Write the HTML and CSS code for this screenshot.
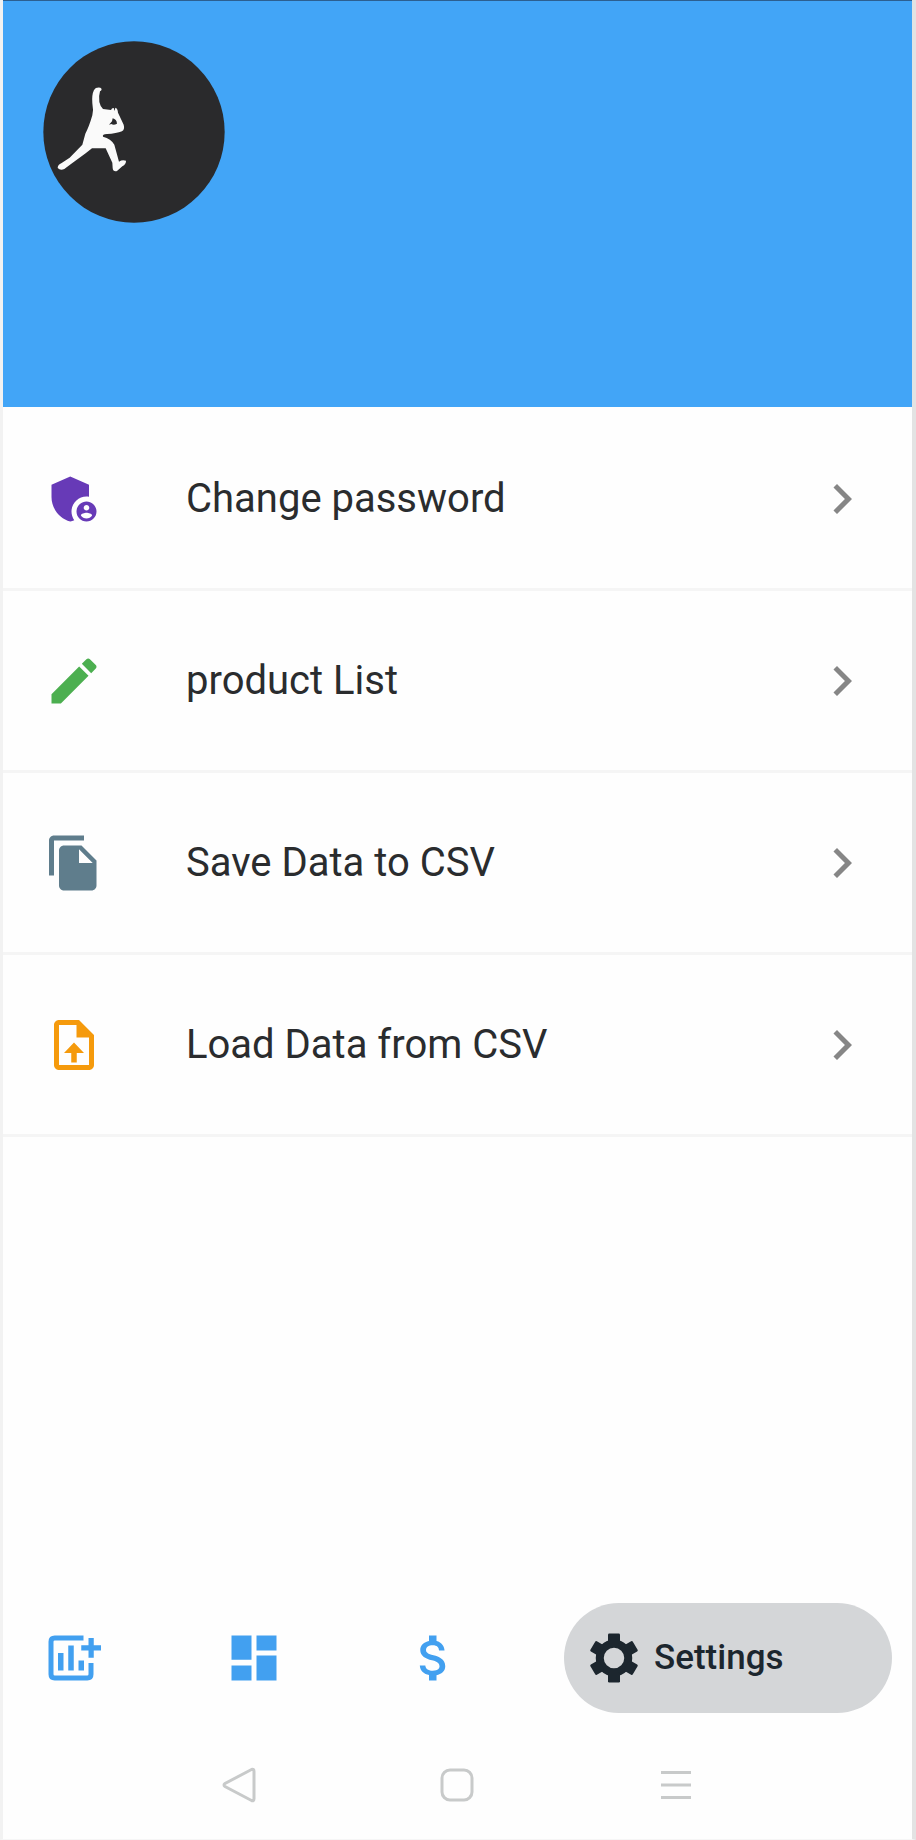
FILE: index.html
```html
<!DOCTYPE html>
<html lang="en">
<head>
<meta charset="utf-8">
<meta name="viewport" content="width=device-width, initial-scale=1">
<title>Settings</title>
<link rel="stylesheet" href="styles.css">
</head>
<body>
<div class="screen">
  <header class="profile">
    <svg class="avatar" viewBox="0 0 546 546" role="img" aria-label="Profile picture">
      <circle cx="273" cy="273" r="272" fill="#2a2a2c"/>
      <g transform="translate(20 103)">
        <path fill="#fafafa" d="M133 44Q138 35 152 37Q160 42 151 48Q147 60 149 80Q152 94 160 101L184 104Q187 97 192 98L195 107L197 97Q204 98 205 112L222 148Q226 162 217 168Q200 175 172 176Q157 177 160 184Q184 190 194 208L208 259Q218 252 229 256Q230 266 218 273L202 287Q190 290 189 278L188 262L168 219H127L108 234L64 266L44 281Q32 287 24 278Q24 268 36 263L60 247L98 208L107 175Q118 155 128 120Q132 104 128 84Q126 58 133 44Z"/>
        <path fill="#2a2a2c" d="M189 129Q201 132 202 145Q192 151 185 146L178 148L187 138Z"/>
      </g>
    </svg>
  </header>

  <main class="content">
    <ul class="menu">
      <li><button class="row" type="button">
        <svg class="icon violet" viewBox="0 0 24 24" aria-hidden="true"><path d="M17 11c.34 0 .67.04 1 .09V6.27L10.5 3 3 6.27v4.91c0 4.54 3.2 8.79 7.5 9.82.55-.13 1.08-.32 1.6-.55-.69-.98-1.1-2.17-1.1-3.45 0-3.31 2.69-6 6-6z"/><path d="M17 13c-2.21 0-4 1.79-4 4s1.79 4 4 4 4-1.79 4-4-1.79-4-4-4zm0 1.38c.62 0 1.12.51 1.12 1.12s-.51 1.12-1.12 1.12-1.12-.51-1.12-1.12.5-1.12 1.12-1.12zm0 5.37c-.93 0-1.74-.46-2.24-1.17.05-.72 1.51-1.08 2.24-1.08s2.19.36 2.24 1.08c-.5.71-1.31 1.17-2.24 1.17z"/></svg>
        <span class="label">Change password</span>
        <svg class="icon chevron" viewBox="0 0 24 24" aria-hidden="true"><path d="M10 6 8.590 7.410 13.170 12l-4.580 4.590L10 18l6-6z"/></svg>
      </button></li>
      <li><button class="row" type="button">
        <svg class="icon green" viewBox="0 0 24 24" aria-hidden="true"><path d="M3 17.250V21h3.750L17.810 9.940l-3.750-3.750L3 17.250zM20.710 7.040c.39-.39.39-1.020 0-1.410l-2.340-2.340c-.39-.39-1.020-.39-1.410 0l-1.830 1.830 3.750 3.750 1.830-1.830z"/></svg>
        <span class="label">product List</span>
        <svg class="icon chevron" viewBox="0 0 24 24" aria-hidden="true"><path d="M10 6 8.590 7.410 13.170 12l-4.580 4.590L10 18l6-6z"/></svg>
      </button></li>
      <li><button class="row" type="button">
        <svg class="icon slate" viewBox="0 0 24 24" aria-hidden="true"><path d="M16 1H4c-1.100 0-2 .9-2 2v14h2V3h12V1zm-1 4 6 6v10c0 1.100-.9 2-2 2H7.990C6.890 23 6 22.100 6 21l.01-14c0-1.100.89-2 1.990-2h7zm-1 7h5.500L14 6.500V12z"/></svg>
        <span class="label">Save Data to CSV</span>
        <svg class="icon chevron" viewBox="0 0 24 24" aria-hidden="true"><path d="M10 6 8.590 7.410 13.170 12l-4.580 4.590L10 18l6-6z"/></svg>
      </button></li>
      <li><button class="row" type="button">
        <svg class="icon orange" viewBox="0 0 24 24" aria-hidden="true"><path fill-rule="evenodd" d="M14 2H6C4.900 2 4 2.900 4 4v16c0 1.100.9 2 2 2h12c1.100 0 2-.9 2-2V8l-6-6zm4 18H6V4h7v5h5v11z"/><path d="m12 11-4 4.200h2.900V19h2.200v-3.800H16z"/></svg>
        <span class="label">Load Data from CSV</span>
        <svg class="icon chevron" viewBox="0 0 24 24" aria-hidden="true"><path d="M10 6 8.590 7.410 13.170 12l-4.580 4.590L10 18l6-6z"/></svg>
      </button></li>
    </ul>
  </main>

  <nav class="tabs" aria-label="Main">
    <button class="tab" type="button" aria-label="Add chart">
      <svg class="icon" viewBox="0 0 24 24" aria-hidden="true"><path fill="none" stroke="currentColor" stroke-width="2" d="M17 4H5.500Q4 4 4 5.500v13Q4 20 5.500 20h13q1.500 0 1.500-1.500V14"/><path d="M6.800 10h2.200v7H6.800zM10.900 7h2.200v10h-2.200zM15 13H17.200v4H15zM19 4h2.100v2.900H24V9h-2.900v2.900H19V9h-2.900V6.900H19z"/></svg>
    </button>
    <button class="tab" type="button" aria-label="Dashboard">
      <svg class="icon" viewBox="0 0 24 24" aria-hidden="true"><path d="M3 12.700h8V3H3v9.700zM3 21h8v-6H3v6zm10 0h8V11h-8v10zm0-18v6h8V3h-8z"/></svg>
    </button>
    <button class="tab" type="button" aria-label="Sales">
      <svg class="icon" viewBox="0 0 24 24" aria-hidden="true"><path d="M11.800 10.900c-2.270-.59-3-1.200-3-2.150 0-1.090 1.010-1.850 2.700-1.850 1.780 0 2.440.85 2.500 2.100h2.210c-.07-1.720-1.120-3.300-3.210-3.810V3h-3v2.160c-1.940.42-3.500 1.680-3.500 3.610 0 2.310 1.910 3.460 4.700 4.130 2.500.6 3 1.480 3 2.410 0 .69-.49 1.790-2.700 1.790-2.060 0-2.870-.92-2.980-2.100h-2.200c.12 2.190 1.760 3.420 3.680 3.830V21h3v-2.150c1.950-.37 3.500-1.500 3.500-3.550 0-2.840-2.430-3.810-4.700-4.400z"/></svg>
    </button>
    <button class="tab active" type="button" aria-current="page">
      <svg class="icon" viewBox="0 0 24 24" aria-hidden="true"><circle cx="12" cy="12" r="5.700" fill="none" stroke="currentColor" stroke-width="3.200"/><g id="teeth"><rect x="9.600" y="2.200" width="4.800" height="4" rx=".5"/><rect x="9.600" y="17.800" width="4.800" height="4" rx=".5"/></g><use href="#teeth" transform="rotate(60 12 12)"/><use href="#teeth" transform="rotate(120 12 12)"/></svg>
      <span class="tab-label">Settings</span>
    </button>
  </nav>

  <div class="system">
    <button class="key" type="button" aria-label="Back"><svg viewBox="0 0 36 36" aria-hidden="true"><path d="M30.500 2.500Q33 1.500 33 4.500v27q0 3-2.500 2L4 19.500Q2 18 4 16.500z"/></svg></button>
    <button class="key" type="button" aria-label="Home"><svg viewBox="0 0 36 36" aria-hidden="true"><rect x="3" y="3" width="30" height="30" rx="8"/></svg></button>
    <button class="key" type="button" aria-label="Recent apps"><svg viewBox="0 0 36 36" aria-hidden="true"><path d="M3 5.500h30M3 18h30M3 30.500h30"/></svg></button>
  </div>
</div>
</body>
</html>
```

FILE: styles.css
```css
* {
  box-sizing: border-box;
}

body {
  margin: 0;
  background: #fefefe;
  color: #2a2c2e;
  font-family: Roboto, "Liberation Sans", sans-serif;
}

button {
  margin: 0;
  padding: 0;
  border: 0;
  background: none;
  color: inherit;
  font: inherit;
  cursor: pointer;
}

.screen {
  display: flex;
  flex-direction: column;
  min-height: 100vh;
  border-left: 3px solid #f2f2f2;
  border-right: 4px solid #e3e3e3;
  border-bottom: 1px solid #f6f6f6;
}

.profile {
  min-height: 407px;
  padding: 40px;
  border-top: 1px solid #2c5f90;
  background: #42a5f7;
}

.avatar {
  display: block;
  width: 182px;
  height: 182px;
}

.content {
  flex: 1;
  padding-top: 2px;
}

.menu {
  margin: 0;
  padding: 0;
  list-style: none;
}

.row {
  display: flex;
  align-items: center;
  gap: 82px;
  width: 100%;
  min-height: 182px;
  padding: 0 40px 0 41px;
  border-bottom: 3px solid #f5f5f5;
  text-align: left;
}

.label {
  flex: 1;
  font-size: 40px;
  line-height: 48px;
}

.icon {
  display: block;
  flex: none;
  width: 60px;
  height: 60px;
  fill: currentColor;
}

.violet { color: #673ab7; }
.green { color: #4caf50; }
.slate { color: #5f7d8c; }
.orange { color: #f59a0c; }
.chevron { color: #868686; }

.tabs {
  display: grid;
  grid-template-columns: 183fr 180fr 160fr 328fr;
  align-items: center;
  padding: 0 20px 0 38px;
}

.tab {
  display: flex;
  align-items: center;
  gap: 10px;
  min-height: 110px;
  color: #42a0f0;
}

.tab.active {
  padding: 0 20px;
  border-radius: 55px;
  background: #d4d6d8;
  color: #1c262e;
}

.tab-label {
  font-size: 35px;
  font-weight: 500;
  line-height: 40px;
}

.system {
  display: grid;
  grid-template-columns: repeat(3, 1fr);
  padding: 47px 14% 29px;
}

.key {
  display: flex;
  align-items: center;
  justify-content: center;
  height: 50px;
}

.key svg {
  width: 36px;
  height: 36px;
  fill: none;
  stroke: #c8caca;
  stroke-width: 3px;
}
```
